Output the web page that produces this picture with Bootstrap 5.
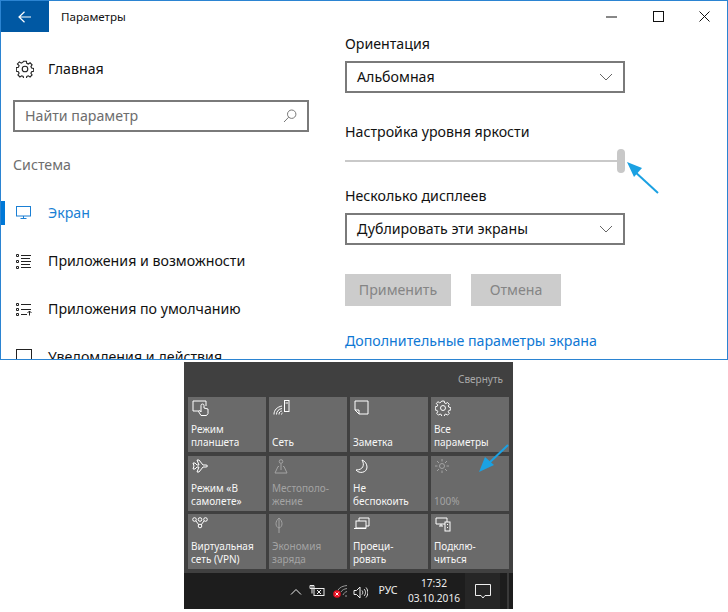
<!DOCTYPE html>
<html lang="ru"><head><meta charset="utf-8"><title>Параметры</title>
<link href="https://cdn.jsdelivr.net/npm/bootstrap@5.3.0/dist/css/bootstrap.min.css" rel="stylesheet">
<style>
html,body{background:#fff;margin:0;height:612px;overflow:hidden}
body{font-family:"Noto Sans","Open Sans","Liberation Sans",sans-serif;color:#111}
.win{height:360px;width:728px;border:1px solid #2b84d2;overflow:hidden;position:relative;font-size:14.2px}
.side{width:344px;flex:none}
.titlerow{height:31px}
.backbtn{width:48px;background:#0058a3}
.titletxt{font-size:11.6px;margin-left:12px}
.homerow{height:48px;margin-top:13px}
.ic{width:47px;padding-left:15px;flex:none;display:flex;align-items:center}
.searchbox{margin:7px 0 0 12px;width:296px;height:32px;border:2px solid #7a7a7a;padding:0 10px;color:#6d6d6d;font-size:14.2px}
.sysline{margin:19px 0 0 12px;color:#6e6e6e;line-height:27px;height:27px}
.navrow{height:48px;position:relative}
.navrow.active{color:#1a7fd4}
.activebar{position:absolute;left:0;top:12px;width:4px;height:24px;background:#0078d7}
.navfirst{margin-top:11px}
.main{flex:1;position:relative}
.ctrls{height:31px}
.ctl{position:absolute;top:0;width:46px;height:31px;display:flex;align-items:center;justify-content:center}
.lbl{line-height:20px;height:20px}
.lbl-first{margin-top:2px}
.sel{width:280px;height:32px;border:2px solid #7a7a7a;padding:0 10px;margin-top:7px}
.slidewrap{width:280px;height:24px;position:relative}
.track{position:absolute;left:0;right:0;top:11px;height:2px;background:#c9c9c9}
.thumb{position:absolute;right:0;top:0;width:8px;height:24px;border-radius:4px;background:#c8c8c8}
.greybtn{height:32px;background:#ccc;color:#858585;padding:0;font-size:14.2px}
.apply{width:106px}.cancel{width:90px}
.morelink{color:#0f78d4;text-decoration:none;line-height:20px}
.overarrow{position:absolute;left:0;top:0;pointer-events:none}
.panel{position:relative;margin:2px 0 0 184px;width:329px;height:247px;background:#404040;overflow:hidden}
.collapse-txt{height:35px;padding-right:10px;color:#a8a8a8;font-size:10px}
.tiles{display:grid;grid-template-columns:78px 78px 78px 78px;grid-auto-rows:55px;column-gap:3px;row-gap:3.5px;padding-left:4px}
.tile{background:#6a6a6a;color:#f7f7f7;font-size:10px;line-height:13px;padding:3px 3px 3px;display:flex;flex-direction:column;justify-content:space-between}
.tile.off{color:#a3a3a3}
.tile svg{display:block;margin-left:1px}
.tbar{position:absolute;left:0;right:0;bottom:0;height:36px;background:#1d1d1d;color:#eee;font-size:10px}
.tbitem{position:absolute;display:flex;align-items:center;justify-content:center}
.clocktxt{text-align:center;line-height:15px;font-size:10.2px}
.notifseg{left:281px;top:0;width:35px;height:36px;background:#262626}
.tbdiv{left:323px;top:0;width:2px;height:36px;background:#3a3a3a}
.label-gap-a{margin-top:29px}
.label-gap-b{margin-top:13px}
.slide-gap{margin-top:7px}
.gap-btns{gap:20px;margin-top:29px}
.more-gap{margin-top:25px}
</style></head><body>
<div class="win d-flex">
 <div class="side">
  <div class="titlerow d-flex align-items-stretch">
   <div class="backbtn d-flex align-items-center justify-content-center">
    <svg width="14" height="12" viewBox="0 0 14 12" fill="none" stroke="#fff" stroke-width="1.2"><path d="M13 6H1M6.5.8 1 6l5.5 5.2"/></svg></div>
   <div class="titletxt d-flex align-items-center">Параметры</div>
  </div>
  <div class="homerow d-flex align-items-center">
   <div class="ic"><svg width="18" height="18" viewBox="0 0 18 18" fill="none" stroke="#222" stroke-width="1.1"><circle cx="9" cy="9" r="2.8"/><path d="M7.6 1.2h2.8l.4 2.100 1.500.7 1.800-1.200 2 2-1.200 1.800.7 1.500 2.100.4v2.800l-2.100.4-.7 1.500 1.200 1.800-2 2-1.800-1.200-1.500.7-.4 2.100H7.600l-.4-2.100-1.500-.7-1.800 1.200-2-2 1.200-1.800-.7-1.500-2.100-.4V7.600l2.100-.4.7-1.500L1.400 3.900l2-2 1.800 1.200 1.500-.7z"/></svg></div>
   <span>Главная</span>
  </div>
  <div class="searchbox d-flex align-items-center justify-content-between">
   <span>Найти параметр</span>
   <svg width="14" height="14" viewBox="0 0 14 14" fill="none" stroke="#777" stroke-width="1"><circle cx="8.7" cy="5.2" r="4.2"/><path d="M5.7 8.2 1 13"/></svg>
  </div>
  <div class="sysline">Система</div>
  <div class="navrow navfirst active d-flex align-items-center"><div class="activebar"></div>
   <div class="ic"><svg width="16" height="14" viewBox="0 0 16 14" fill="none" stroke="#1a7fd4" stroke-width="1"><rect x=".5" y=".5" width="14" height="9.5"/><path d="M7.5 10v2.500M4.500 12.500h6"/></svg></div>
   <span>Экран</span></div>
  <div class="navrow d-flex align-items-center">
   <div class="ic"><svg width="16" height="15" viewBox="0 0 16 15" fill="none" stroke="#222" stroke-width="1"><path d="M.5.500h2v2h-2zM.5 6.500h2v2h-2zM.5 12.500h2v2h-2zM5 1.500h10M5 4.500h9M5 7.500h10M5 10.500h9M5 13.500h10"/></svg></div>
   <span>Приложения и возможности</span></div>
  <div class="navrow d-flex align-items-center">
   <div class="ic"><svg width="16" height="13" viewBox="0 0 16 13" fill="none" stroke="#222" stroke-width="1"><path d="M.5.500h2v2h-2zM.5 5.500h2v2h-2zM.5 10.500h2v2h-2zM5 1.500h10M5 6.500h10M5 11.500h6M13.500 12.500V8M11.500 10l2-2 2 2"/></svg></div>
   <span>Приложения по умолчанию</span></div>
  <div class="navrow d-flex align-items-center">
   <div class="ic"><svg width="16" height="16" viewBox="0 0 16 16" fill="none" stroke="#222" stroke-width="1"><rect x=".5" y=".5" width="15" height="15"/></svg></div>
   <span>Уведомления и действия</span></div>
 </div>
 <div class="main">
  <div class="ctrls"></div>
  <div class="lbl lbl-first">Ориентация</div>
  <div class="sel d-flex align-items-center justify-content-between"><span>Альбомная</span>
   <svg width="14" height="8" viewBox="0 0 14 8" fill="none" stroke="#666" stroke-width="1"><path d="M1 1l6 6 6-6"/></svg></div>
  <div class="lbl label-gap-a">Настройка уровня яркости</div>
  <div class="slidewrap slide-gap"><div class="track"></div><div class="thumb"></div></div>
  <div class="lbl label-gap-b">Несколько дисплеев</div>
  <div class="sel d-flex align-items-center justify-content-between"><span>Дублировать эти экраны</span>
   <svg width="14" height="8" viewBox="0 0 14 8" fill="none" stroke="#666" stroke-width="1"><path d="M1 1l6 6 6-6"/></svg></div>
  <div class="d-flex gap-btns"><button class="btn rounded-0 border-0 greybtn apply">Применить</button><button class="btn rounded-0 border-0 greybtn cancel">Отмена</button></div>
  <a class="morelink d-block more-gap" href="#">Дополнительные параметры экрана</a>
 </div>
 <div class="ctl" style="left:588px"><svg width="12" height="2" viewBox="0 0 12 2"><path d="M0 1h11" stroke="#111"/></svg></div>
 <div class="ctl" style="left:634px"><svg width="11" height="11" viewBox="0 0 11 11" fill="none" stroke="#111"><rect x=".5" y=".5" width="10" height="10"/></svg></div>
 <div class="ctl" style="left:680px"><svg width="11" height="11" viewBox="0 0 11 11" fill="none" stroke="#111"><path d="M.5.500l10 10M10.500.500l-10 10"/></svg></div>
 <svg class="overarrow" width="726" height="358" viewBox="0 0 726 358"><path d="M657 192 632 169" stroke="#1ba1e2" stroke-width="2" fill="none"/><path d="M626 161l15 6-8 9z" fill="#1ba1e2"/></svg>
</div>
<div class="panel">
 <div class="collapse-txt d-flex align-items-center justify-content-end">Свернуть</div>
 <div class="tiles">
  <div class="tile"><svg width="18" height="16" viewBox="0 0 18 16" fill="none" stroke="#fff"><path d="M7 11H1V1h13v5"/><path d="M9 7v5l-1-1.500-1.500 1L9 15.500h5.500l1.500-2V9l-4-1V5.500a1.500 1.500 0 0 0-3 0z"/></svg><div>Режим<br>планшета</div></div>
  <div class="tile"><svg width="18" height="16" viewBox="0 0 18 16" fill="none" stroke="#fff"><path d="M1 14.500C1 10 4 7 9 6M3.500 14.500c0-3 2-5.500 5.500-6M6 14.500c0-2 1-3.500 3-3.500M8.500 14.500c0-1 .500-1.500 1-1.500"/><rect x="11.500" y=".5" width="4.500" height="11"/><path d="M12.500 3h2.500"/></svg><div>Сеть</div></div>
  <div class="tile"><svg width="16" height="15" viewBox="0 0 16 15" fill="none" stroke="#fff"><path d="M1 1h13v13H5L1 10zM1 10h4v4"/></svg><div>Заметка</div></div>
  <div class="tile"><svg width="16" height="16" viewBox="0 0 18 18" fill="none" stroke="#fff" stroke-width="1.100"><circle cx="9" cy="9" r="2.800"/><path d="M7.600 1.200h2.800l.4 2.100 1.500.7 1.800-1.200 2 2-1.200 1.800.7 1.500 2.100.4v2.800l-2.100.4-.7 1.500 1.200 1.800-2 2-1.800-1.200-1.500.7-.4 2.100H7.600l-.4-2.100-1.500-.7-1.800 1.200-2-2 1.200-1.800-.7-1.500-2.100-.4V7.600l2.100-.4.7-1.500L1.400 3.900l2-2 1.800 1.200 1.500-.7z"/></svg><div>Все<br>параметры</div></div>
  <div class="tile"><svg width="16" height="14" viewBox="0 0 16 14" fill="none" stroke="#fff"><path d="M1 4h2l2 2h2L5 1h2l4 5h3c1 0 1.500.5 1.500 1s-.5 1-1.500 1h-3l-4 5H5l2-5H5l-2 2H1l1-3z"/></svg><div>Режим «В<br>самолете»</div></div>
  <div class="tile off"><svg width="16" height="15" viewBox="0 0 16 15" fill="none" stroke="#a3a3a3"><circle cx="8" cy="2.500" r="1.800"/><path d="M8 4.500V11M6 7.500H5l-3 6.500h12l-3-6.500h-1"/></svg><div>Местополо-<br>жение</div></div>
  <div class="tile"><svg width="14" height="15" viewBox="0 0 14 15" fill="none" stroke="#fff"><path d="M8 1c3 5 1 10-6 10 3 4 11 3 11-3 0-3-2-6-5-7z"/></svg><div>Не<br>беспокоить</div></div>
  <div class="tile off"><svg width="14" height="14" viewBox="0 0 14 14" fill="none" stroke="#a3a3a3"><circle cx="7" cy="7" r="2.500"/><path d="M7 0v2.500M7 11.500V14M0 7h2.500M11.500 7H14M2 2l2 2M10 10l2 2M12 2l-2 2M4 10l-2 2"/></svg><div>&nbsp;<br>100%</div></div>
  <div class="tile"><svg width="16" height="12" viewBox="0 0 16 12" fill="none" stroke="#fff"><circle cx="2.500" cy="2.500" r="1.800"/><circle cx="8" cy="2.500" r="1.800"/><circle cx="13.500" cy="2.500" r="1.800"/><circle cx="8" cy="9" r="1.800"/><path d="M4 4l3 4M12 4l-3 4"/></svg><div>Виртуальная<br>сеть (VPN)</div></div>
  <div class="tile off"><svg width="12" height="16" viewBox="0 0 12 16" fill="none" stroke="#a3a3a3"><path d="M6 1C2 4 2 10 6 11c4-1 4-7 0-10zM6 1v15"/></svg><div>Экономия<br>заряда</div></div>
  <div class="tile"><svg width="16" height="14" viewBox="0 0 16 14" fill="none" stroke="#fff"><path d="M5 4V1h10v8h-3"/><rect x="2" y="4" width="10" height="7"/><path d="M0 11.500h12"/></svg><div>Проеци-<br>ровать</div></div>
  <div class="tile"><svg width="16" height="15" viewBox="0 0 16 15" fill="none" stroke="#fff"><path d="M1 1h11v6H1zM4 9h4M6 7v2"/><rect x="10" y="5" width="5" height="9" fill="#6a6a6a"/><path d="M12.500 7v1M12.500 10v1"/></svg><div>Подклю-<br>читься</div></div>
 </div>
 <svg class="overarrow" width="329" height="247" viewBox="0 0 329 247"><path d="M324 83 304 102" stroke="#1ba1e2" stroke-width="2" fill="none"/><path d="M295 110l6-15 9 8z" fill="#1ba1e2"/></svg>
 <div class="tbar">
  <div class="tbitem notifseg"></div>
  <div class="tbitem tbdiv"></div>
  <div class="tbitem" style="left:105px;top:12px;width:14px;height:12px"><svg width="12" height="7" viewBox="0 0 12 7" fill="none" stroke="#eee"><path d="M1 6.500l5-5 5 5"/></svg></div>
  <div class="tbitem" style="left:125px;top:11px;width:16px;height:13px"><svg width="16" height="12" viewBox="0 0 16 12" fill="none" stroke="#eee"><path d="M3 .5v8M1 .5h4v3H1z"/><rect x="5" y="3.500" width="10" height="7"/><path d="M8 5l4 4M12 5l-4 4"/></svg></div>
  <div class="tbitem" style="left:148px;top:11px;width:16px;height:15px"><svg width="16" height="15" viewBox="0 0 16 15" fill="none"><path d="M6 6C8 3 11 2 15 1.500M9 8c1-2 3-3 6-3.500M11 11c1-2 2-3 4-3.500M14 13v-2" stroke="#999"/><circle cx="5" cy="10" r="3.800" fill="#e81123"/><path d="M3.500 8.500l3 3M6.500 8.500l-3 3" stroke="#fff"/></svg></div>
  <div class="tbitem" style="left:169px;top:12px;width:15px;height:14px"><svg width="15" height="13" viewBox="0 0 15 13" fill="none" stroke="#eee"><path d="M1 4.500h2.500L7 1v11L3.500 8.500H1zM9 4.500c1 1 1 3 0 4M11 3c2 2 2 5 0 7M13 1.500c2.500 3 2.500 7 0 10"/></svg></div>
  <div class="tbitem" style="left:192px;top:10px;width:24px;height:16px;font-size:10.500px">РУС</div>
  <div class="tbitem clocktxt" style="left:222px;top:2px;width:56px;height:32px"><div>17:32<br>03.10.2016</div></div>
  <div class="tbitem" style="left:290px;top:10px;width:18px;height:17px"><svg width="16" height="15" viewBox="0 0 16 15" fill="none" stroke="#eee"><path d="M.5.500h15v11H10l-2 2.500-2-2.500H.5z"/></svg></div>
 </div>
</div>
</body></html>
